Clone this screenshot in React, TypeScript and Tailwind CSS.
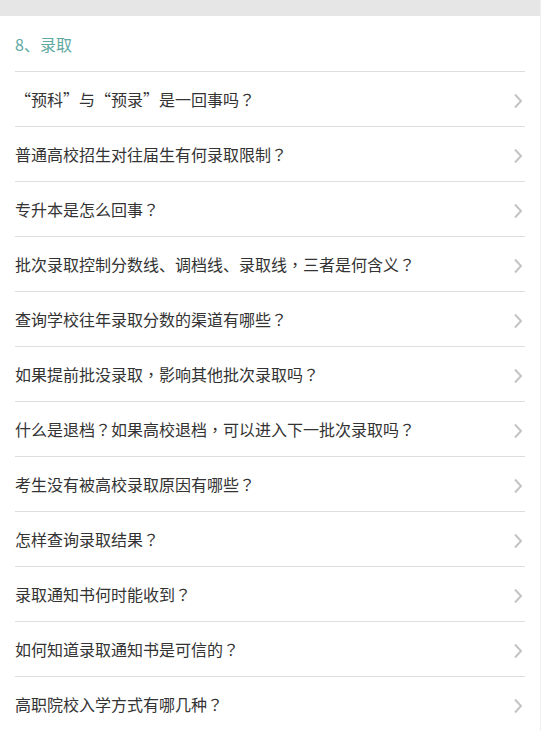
import { Fragment } from 'react';

const QUESTIONS = [
  '“预科”与“预录”是一回事吗？',
  '普通高校招生对往届生有何录取限制？',
  '专升本是怎么回事？',
  '批次录取控制分数线、调档线、录取线，三者是何含义？',
  '查询学校往年录取分数的渠道有哪些？',
  '如果提前批没录取，影响其他批次录取吗？',
  '什么是退档？如果高校退档，可以进入下一批次录取吗？',
  '考生没有被高校录取原因有哪些？',
  '怎样查询录取结果？',
  '录取通知书何时能收到？',
  '如何知道录取通知书是可信的？',
  '高职院校入学方式有哪几种？',
];

// full-width ？ and ， sit centred in their cell, so they take the TC face
function Title({ text }: { text: string }) {
  const parts = text.split(/([？，])/);
  return (
    <span className="text-base text-[#333333]">
      {parts.map((part, index) =>
        part === '？' || part === '，' ? (
          <span key={index} className="font-['Noto_Sans_CJK_TC']">
            {part}
          </span>
        ) : (
          <Fragment key={index}>{part}</Fragment>
        ),
      )}
    </span>
  );
}

function Arrow() {
  return (
    <svg width="10" height="16" viewBox="0 0 10 16" className="shrink-0 mt-[3px]">
      <polyline
        points="2,1.5 8,8 2,14.5"
        fill="none"
        stroke="#c4c4c4"
        strokeWidth="2"
      />
    </svg>
  );
}

function App() {
  return (
    <div
      className="min-h-[731px] w-[541px] bg-white border-r border-[#f0f0f0]"
      style={{ fontFamily: '"Microsoft YaHei", "Noto Sans CJK SC", sans-serif' }}
    >
      <div className="h-4 bg-[#e6e6e6]" />
      <div className="px-[15px]">
        <div className="h-[55px] flex items-center text-base text-[#5ea9a2]">
          8、录取
        </div>
        <ul>
          {QUESTIONS.map((q, index) => (
            <li
              key={index}
              className="h-[55px] border-t border-[#dddddd] flex items-center justify-between pr-[2px]"
            >
              <Title text={q} />
              <Arrow />
            </li>
          ))}
        </ul>
      </div>
    </div>
  );
}

export default App;
